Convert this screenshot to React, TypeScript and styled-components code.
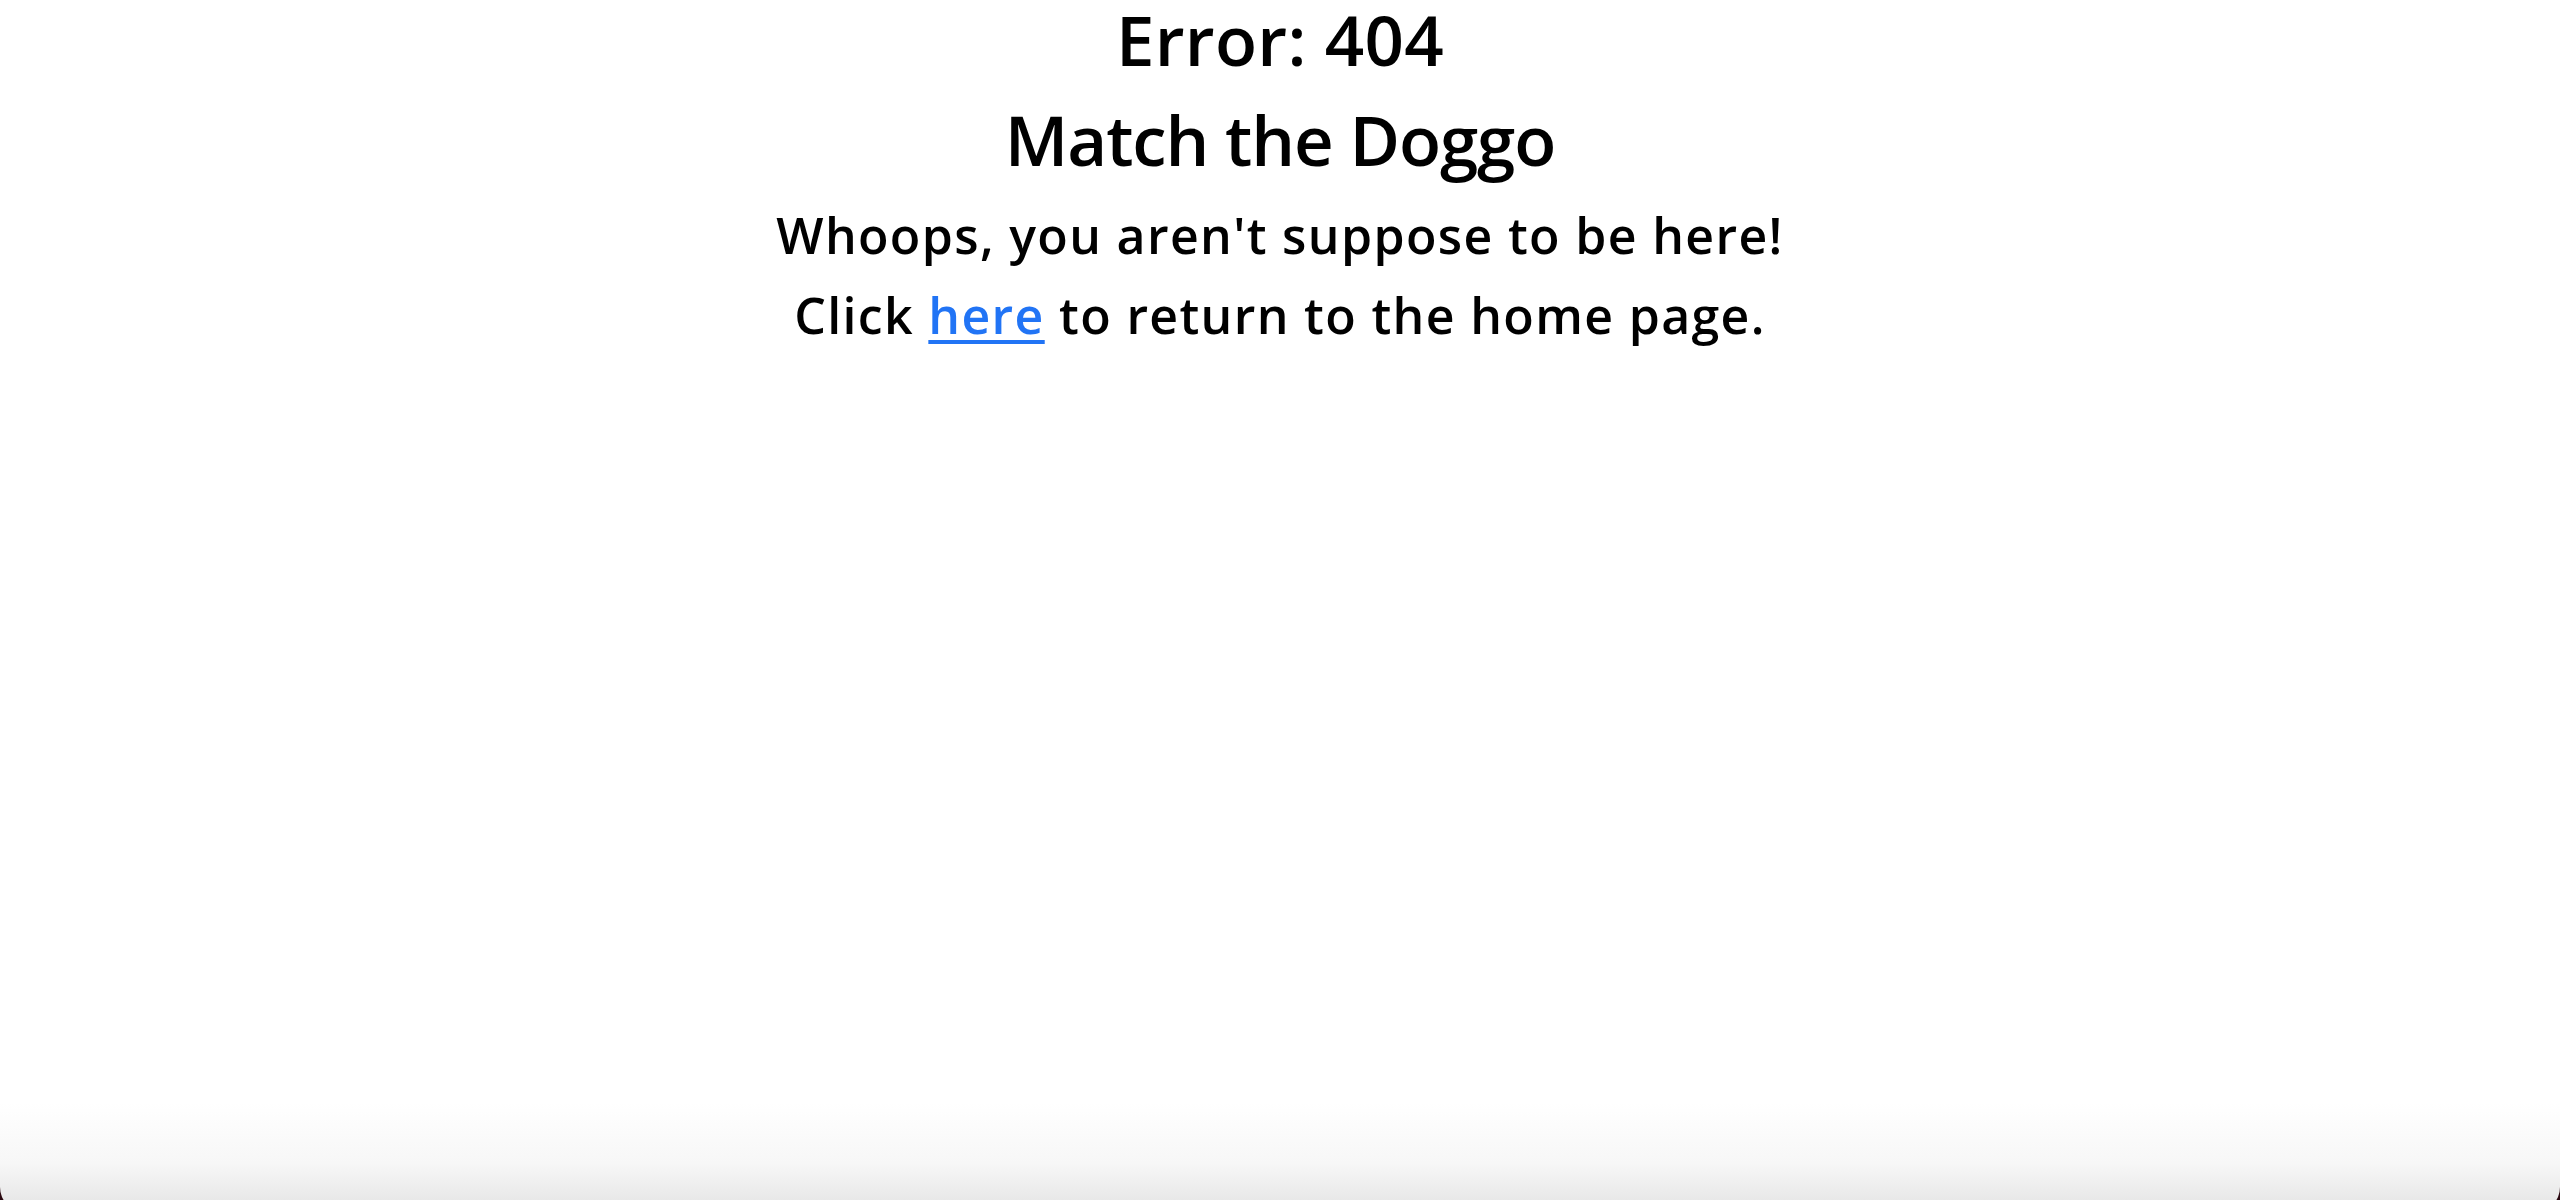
import React from "react";
import styled, { createGlobalStyle } from "styled-components";

const Global = createGlobalStyle`
  html, body {
    margin: 0;
    padding: 0;
    background: #2a0810;
    overflow: hidden;
  }
  body {
    font-family: "Open Sans", "Lato", sans-serif;
  }
`;

const Window = styled.div`
  height: 1213px;
  box-sizing: border-box;
  background: linear-gradient(
    to bottom,
    #ffffff 0,
    #ffffff calc(100% - 110px),
    #f7f7f7 calc(100% - 50px),
    #e3e3e3 100%
  );
  border-radius: 0 0 26px 26px;
  display: flex;
  flex-direction: column;
  align-items: center;
`;

const Title = styled.h1<{ $top: number; $spacing: number }>`
  margin: ${(p) => p.$top}px 0 0;
  font-size: 69px;
  line-height: 78px;
  font-weight: 600;
  letter-spacing: ${(p) => p.$spacing}px;
  color: #000;
`;

const Line = styled.p<{ $top: number }>`
  margin: ${(p) => p.$top}px 0 0;
  font-size: 50px;
  line-height: 60px;
  font-weight: 600;
  letter-spacing: 1.35px;
  color: #000;
`;

const Link = styled.a`
  color: #2174f5;
  text-decoration: underline;
  text-decoration-thickness: 4px;
  text-underline-offset: 6px;
`;

export default function App() {
  return (
    <>
      <Global />
      <Window>
        <Title $top={0} $spacing={0.3}>Error: 404</Title>
        <Title $top={22} $spacing={-1.1}>Match the Doggo</Title>
        <Line $top={27}>Whoops, you aren't suppose to be here!</Line>
        <Line $top={20}>
          Click <Link href="#">here</Link> to return to the home page.
        </Line>
      </Window>
    </>
  );
}
